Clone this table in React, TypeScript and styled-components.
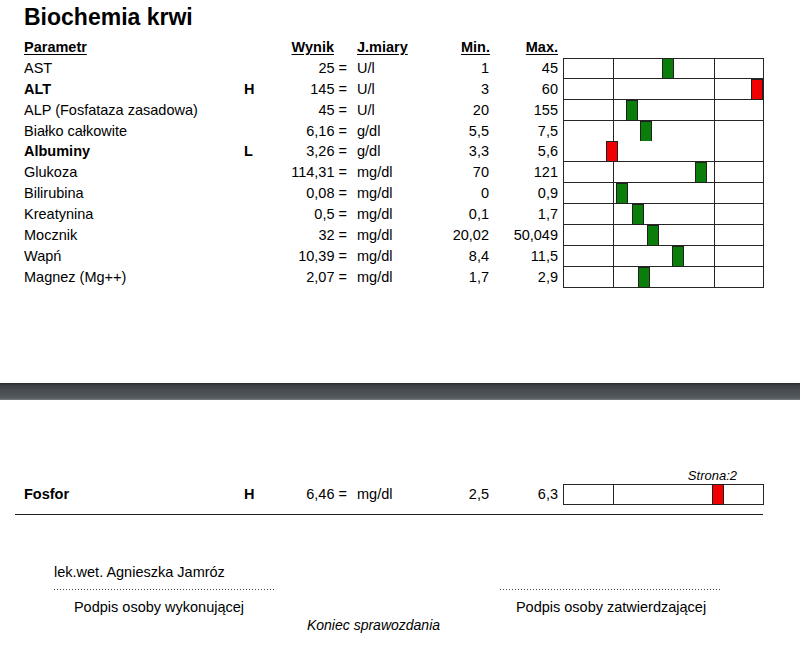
import React from "react";
import styled, { createGlobalStyle } from "styled-components";

const ROW_H = 20.9;
const CHART_W = 201;

const Global = createGlobalStyle`
  html, body { margin: 0; padding: 0; background: #fff; }
  body { font-family: "Liberation Sans", Arial, sans-serif; color: #000; }
`;

const Page = styled.div`
  width: 800px;
  height: 651px;
  overflow: hidden;
  background: #fff;
`;

const Title = styled.h1`
  margin: 0;
  padding-left: 24px;
  height: 37px;
  line-height: 35px;
  font-size: 23px;
  font-weight: bold;
`;

const Table = styled.div`
  display: flex;
  flex-direction: column;
`;

const Row = styled.div`
  display: grid;
  grid-template-columns: 220px 30px 73px 90px 53px 68px 206px;
  padding-left: 24px;
  height: ${ROW_H}px;
  font-size: 14.5px;
  line-height: ${ROW_H + 1}px;
  white-space: nowrap;
`;

const Cell = styled.div<{ $align?: "left" | "right"; $bold?: boolean; $pr?: number; $pl?: number }>`
  text-align: ${(p) => p.$align ?? "left"};
  font-weight: ${(p) => (p.$bold ? "bold" : "normal")};
  padding-right: ${(p) => p.$pr ?? 0}px;
  padding-left: ${(p) => p.$pl ?? 0}px;
  white-space: pre;
`;

const HeadCell = styled(Cell)`
  font-weight: bold;
  text-decoration: underline;
  text-underline-offset: 2px;
`;

const ChartCell = styled.div`
  padding-left: 5px;
  height: ${ROW_H}px;
  svg { display: block; }
`;

const Separator = styled.div`
  margin-top: 95px;
  height: 17px;
  background: linear-gradient(
    to bottom,
    #25282b 0%,
    #3a3e42 12%,
    #474c50 40%,
    #50555a 75%,
    #5b6064 92%,
    #7d8185 100%
  );
`;

const PageMark = styled.div`
  margin-top: 68px;
  height: 16px;
  line-height: 16px;
  font-size: 13px;
  font-style: italic;
  text-align: right;
  padding-right: 63px;
`;

const Rule = styled.div`
  margin: 9px 0 0 15px;
  width: 748px;
  height: 1.5px;
  background: #1e1e1e;
`;

const Signatures = styled.div`
  display: flex;
  gap: 224px;
  padding-left: 54px;
  margin-top: 48px;
  font-size: 14.5px;
`;

const SignBlock = styled.div`
  width: 222px;
  display: flex;
  flex-direction: column;
`;

const SignName = styled.div`
  height: 18px;
  line-height: 18px;
  white-space: nowrap;
`;

const Dots = styled.div`
  margin-top: 8px;
  height: 1px;
  background-image: linear-gradient(to right, #444 1px, transparent 1px);
  background-size: 3px 1px;
`;

const Caption = styled.div<{ $shift?: number }>`
  margin-top: 8px;
  height: 18px;
  line-height: 19px;
  text-align: center;
  white-space: nowrap;
  padding-right: ${(p) => Math.max(0, -(p.$shift ?? 0)) * 2}px;
  padding-left: ${(p) => Math.max(0, p.$shift ?? 0) * 2}px;
`;

const EndNote = styled.div`
  height: 18px;
  line-height: 19px;
  font-size: 14px;
  font-style: italic;
  text-align: center;
  padding-right: 53px;
`;

type Item = {
  name: string;
  flag?: "H" | "L";
  value: string;
  unit: string;
  min: string;
  max: string;
};

const num = (s: string) => parseFloat(s.replace(",", "."));

const Gauge: React.FC<{ item: Item; first?: boolean }> = ({ item, first }) => {
  const v = num(item.value);
  const mn = num(item.min);
  const mx = num(item.max);
  const range = mx - mn;
  const lo = mn - range / 2;
  const hi = mx + range / 2;
  let x = ((v - lo) / (hi - lo)) * CHART_W;
  x = Math.max(7, Math.min(CHART_W - 7, x));
  x = Math.round(x);
  const color = item.flag ? "#f00000" : "#0a7d0a";
  const h = ROW_H;
  const line = "#262626";
  return (
    <svg width={CHART_W} height={h} viewBox={`0 0 ${CHART_W} ${h}`} shapeRendering="crispEdges">
      {first && <line x1={0} y1={0.5} x2={CHART_W} y2={0.5} stroke={line} strokeWidth={1} />}
      <line x1={0} y1={h - 0.5} x2={CHART_W} y2={h - 0.5} stroke={line} strokeWidth={1} />
      {[0.5, 50.5, 151.5, CHART_W - 0.5].map((lx) => (
        <line key={lx} x1={lx} y1={0} x2={lx} y2={h} stroke={line} strokeWidth={1} />
      ))}
      <rect x={x - 5.5} y={0.5} width={11} height={h - 1} fill={color} stroke="#202020" strokeWidth={1} />
    </svg>
  );
};

const ResultRow: React.FC<{ item: Item; first?: boolean }> = ({ item, first }) => (
  <Row>
    <Cell $bold={!!item.flag}>{item.name}</Cell>
    <Cell $bold>{item.flag ?? ""}</Cell>
    <Cell $align="right">{`${item.value} =`}</Cell>
    <Cell $pl={10}>{item.unit}</Cell>
    <Cell $align="right" $pr={1}>{item.min}</Cell>
    <Cell $align="right">{item.max}</Cell>
    <ChartCell>
      <Gauge item={item} first={first} />
    </ChartCell>
  </Row>
);

const items: Item[] = [
  { name: "AST", value: "25", unit: "U/l", min: "1", max: "45" },
  { name: "ALT", flag: "H", value: "145", unit: "U/l", min: "3", max: "60" },
  { name: "ALP (Fosfataza zasadowa)", value: "45", unit: "U/l", min: "20", max: "155" },
  { name: "Białko całkowite", value: "6,16", unit: "g/dl", min: "5,5", max: "7,5" },
  { name: "Albuminy", flag: "L", value: "3,26", unit: "g/dl", min: "3,3", max: "5,6" },
  { name: "Glukoza", value: "114,31", unit: "mg/dl", min: "70", max: "121" },
  { name: "Bilirubina", value: "0,08", unit: "mg/dl", min: "0", max: "0,9" },
  { name: "Kreatynina", value: "0,5", unit: "mg/dl", min: "0,1", max: "1,7" },
  { name: "Mocznik", value: "32", unit: "mg/dl", min: "20,02", max: "50,049" },
  { name: "Wapń", value: "10,39", unit: "mg/dl", min: "8,4", max: "11,5" },
  { name: "Magnez (Mg++)", value: "2,07", unit: "mg/dl", min: "1,7", max: "2,9" },
];

const fosfor: Item = { name: "Fosfor", flag: "H", value: "6,46", unit: "mg/dl", min: "2,5", max: "6,3" };

export default function App() {
  return (
    <Page>
      <Global />
      <Title>Biochemia krwi</Title>
      <Table>
        <Row>
          <HeadCell>Parametr</HeadCell>
          <Cell />
          <HeadCell $align="right" $pr={13}>Wynik</HeadCell>
          <HeadCell $pl={10}>J.miary</HeadCell>
          <HeadCell $align="right">Min.</HeadCell>
          <HeadCell $align="right">Max.</HeadCell>
          <Cell />
        </Row>
        {items.map((it, i) => (
          <ResultRow key={it.name} item={it} first={i === 0} />
        ))}
      </Table>
      <Separator />
      <PageMark>Strona:2</PageMark>
      <ResultRow item={fosfor} first />
      <Rule />
      <Signatures>
        <SignBlock>
          <SignName>lek.wet. Agnieszka Jamróz</SignName>
          <Dots />
          <Caption $shift={-6}>Podpis osoby wykonującej</Caption>
        </SignBlock>
        <SignBlock>
          <SignName />
          <Dots />
          <Caption>Podpis osoby zatwierdzającej</Caption>
        </SignBlock>
      </Signatures>
      <EndNote>Koniec sprawozdania</EndNote>
    </Page>
  );
}
